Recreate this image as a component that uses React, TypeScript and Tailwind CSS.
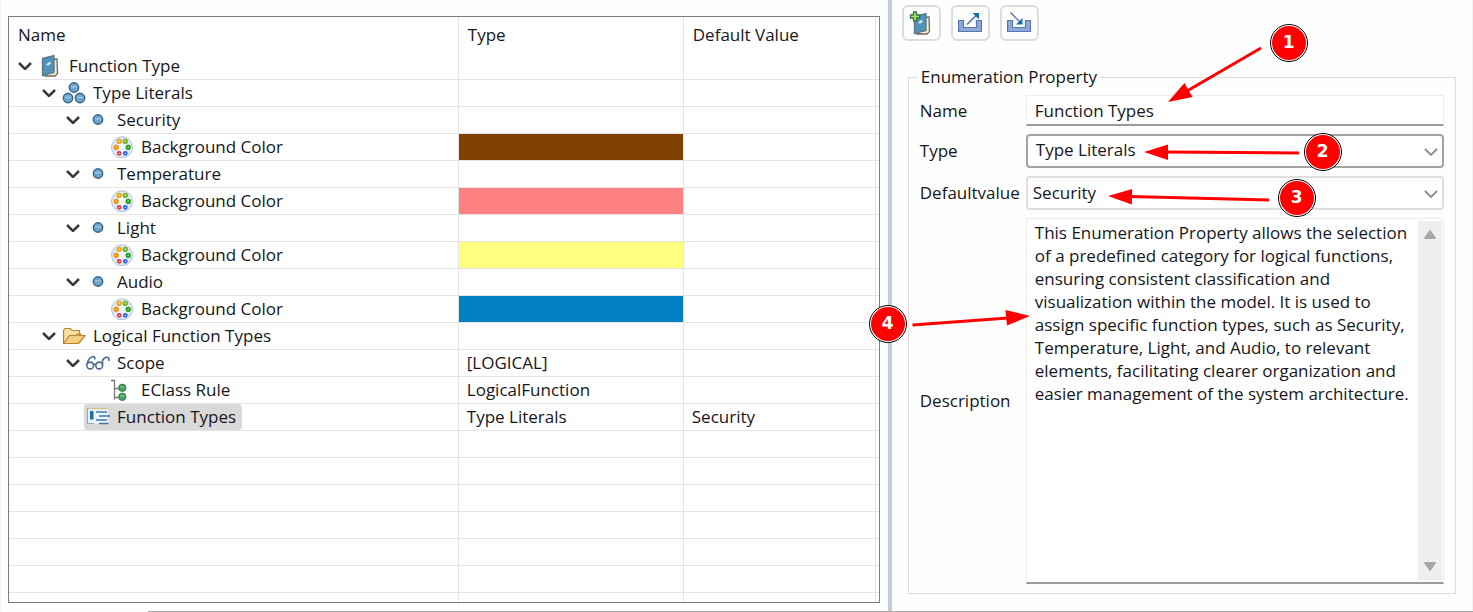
import type { ReactNode } from "react";

type IconName = "book" | "literals" | "literal" | "palette" | "folder" | "scope" | "rule" | "property";

interface Row {
  level: number;
  label: string;
  icon: IconName;
  leaf?: boolean;
  selected?: boolean;
  type?: string;
  value?: string;
  swatch?: string;
}

const rows: Row[] = [
  { level: 0, label: "Function Type", icon: "book" },
  { level: 1, label: "Type Literals", icon: "literals" },
  { level: 2, label: "Security", icon: "literal" },
  { level: 3, label: "Background Color", icon: "palette", leaf: true, swatch: "bg-[#804000]" },
  { level: 2, label: "Temperature", icon: "literal" },
  { level: 3, label: "Background Color", icon: "palette", leaf: true, swatch: "bg-[#ff8080]" },
  { level: 2, label: "Light", icon: "literal" },
  { level: 3, label: "Background Color", icon: "palette", leaf: true, swatch: "bg-[#ffff80]" },
  { level: 2, label: "Audio", icon: "literal" },
  { level: 3, label: "Background Color", icon: "palette", leaf: true, swatch: "bg-[#0080c0]" },
  { level: 1, label: "Logical Function Types", icon: "folder" },
  { level: 2, label: "Scope", icon: "scope", type: "[LOGICAL]" },
  { level: 3, label: "EClass Rule", icon: "rule", leaf: true, type: "LogicalFunction" },
  { level: 2, label: "Function Types", icon: "property", leaf: true, selected: true, type: "Type Literals", value: "Security" },
];

const indents = ["pl-[5px]", "pl-[29px]", "pl-[53px]", "pl-[77px]"];
const fillerRows = [0, 1, 2, 3, 4, 5, 6];

const description =
  "This Enumeration Property allows the selection of a predefined category for logical functions, ensuring consistent classification and visualization within the model. It is used to assign specific function types, such as Security, Temperature, Light, and Audio, to relevant elements, facilitating clearer organization and easier management of the system architecture.";

function Book() {
  return (
    <g>
      <path d="M8 6 L19 5 L19.500 19.500 L17 22 L7.500 22 Z" fill="#f3eed6" stroke="#6f6a5c" strokeWidth="1.3" />
      <path d="M4.500 4.500 L16 1.500 L16 18.500 L9.500 20 L8 21.500 L4.500 21.500 Z" fill="#4f94bb" stroke="#5f7480" strokeWidth="1.3" />
      <path d="M8.500 10.800 q2 -3 4.200 -2 q-1.600 3.200 -4.200 2 z" fill="#e8f4fb" stroke="#e8f4fb" strokeWidth="0.600" />
    </g>
  );
}

function Ball({ cx, cy, r }: { cx: number; cy: number; r: number }) {
  return (
    <g>
      <circle cx={cx} cy={cy} r={r} fill="#6da5cb" stroke="#36648d" strokeWidth="1.4" />
      <path d={`M${cx - r * 0.6} ${cy - 0.6} H${cx + r * 0.6}`} stroke="#a3cbe4" strokeWidth="1.3" />
    </g>
  );
}

function RowIcon({ name }: { name: IconName }) {
  const art: Record<IconName, ReactNode> = {
    book: <Book />,
    literals: (
      <g>
        <Ball cx={12} cy={6.5} r={4.7} />
        <Ball cx={6} cy={17} r={4.7} />
        <Ball cx={18} cy={17} r={4.7} />
      </g>
    ),
    literal: <Ball cx={12} cy={11.5} r={4.7} />,
    palette: (
      <g fill="#fff" strokeWidth="1.7">
        <path d="M5.5 20.5 A10.5 10.5 0 1 1 18.5 20.5 Q15.5 23 12.5 22.5 Q8 23.5 5.5 20.5 Z" fill="#dfe7f4" stroke="#b3c4de" strokeWidth="1" />
        <circle cx="12" cy="12.5" r="4.5" fill="#f1f5fa" />
        <circle cx="9.2" cy="6.3" r="1.8" fill="#ffe08a" stroke="#f0a500" />
        <circle cx="15.3" cy="6.3" r="1.8" fill="#d6ee7a" stroke="#6bb01c" />
        <circle cx="6.2" cy="12.3" r="1.8" fill="#ffc04a" stroke="#f58e00" />
        <circle cx="18.2" cy="12.3" r="1.8" fill="#8be05a" stroke="#1c9a1c" />
        <circle cx="9.2" cy="18.3" r="1.5" stroke="#e53946" />
        <circle cx="15.3" cy="18.3" r="1.5" stroke="#2763e6" />
      </g>
    ),
    folder: (
      <g stroke="#b9822f" strokeWidth="1.2" strokeLinejoin="round">
        <path d="M1.5 18.5 V6.5 L3 4.5 H8.5 L10 6.5 H17.5 V10 H19 L7 18.5 Z" fill="#f7dfa0" />
        <path d="M1.5 19.5 L7.5 11.5 H14 L15.5 10 L17 11.5 H23.3 L16.5 19.5 Z" fill="#f6ce80" />
      </g>
    ),
    scope: (
      <g fill="none" stroke="#4d6a91" strokeWidth="1.6">
        <circle cx="4.2" cy="14.5" r="3.4" />
        <circle cx="13.2" cy="14.5" r="3.4" />
        <path d="M7.6 14 Q8.7 12.5 9.8 14" />
        <path d="M1 13.5 Q2.2 6.5 7.2 5.5 Q9.2 5.5 8.7 8.5" />
        <path d="M16.5 14.5 V9.5 Q18.7 5.5 22.2 6.5 Q23.2 7.5 22.7 10" />
      </g>
    ),
    rule: (
      <g>
        <path d="M1 2.5 H4.5 V21.5 M4.5 10.5 H9 M4.5 19.5 H9" fill="none" stroke="#787878" strokeWidth="1.3" />
        <circle cx="12.3" cy="9.8" r="3.7" fill="#4a9f5e" stroke="#33804a" />
        <circle cx="12.3" cy="18.8" r="3.7" fill="#4a9f5e" stroke="#33804a" />
        <path d="M10 9 H14.5 M10 18 H14.5" stroke="#8fcb9b" strokeWidth="1" />
      </g>
    ),
    property: (
      <g>
        <path d="M2 4.2 H22 V18.5 H2 Z" fill="#f0f5fb" />
        <path d="M1.5 3.5 H22" stroke="#d3c68c" strokeWidth="1.4" />
        <path d="M1.5 3.5 V18.5 H8" fill="none" stroke="#8aa7cc" strokeWidth="1.2" />
        <path d="M4 6 H7.5 V14.5 H4 Z" fill="#1f6ea8" />
        <path d="M10 7 H21 M13 11 H24 M10 15 H21 M13 18.5 H22.5" stroke="#3779ad" strokeWidth="1.7" />
      </g>
    ),
  };
  return (
    <svg viewBox="0 0 24 24" className="size-6 shrink-0" aria-hidden="true">
      {art[name]}
    </svg>
  );
}

function Chevron({ className, width }: { className: string; width: number }) {
  return (
    <svg viewBox="0 0 14 8" className={className} fill="none" stroke="currentColor" strokeWidth={width} aria-hidden="true">
      <path d="M1 1 L7 7 L13 1" />
    </svg>
  );
}

function TreeTable() {
  const line = "border-r border-[#e4e4e4]";
  const cell = "h-[27px] border-r border-b border-[#e4e4e4] p-0";
  return (
    <div className="min-h-0 flex-1 overflow-hidden border border-[#7c7c7c] bg-white">
      <table className="w-full table-fixed border-separate border-spacing-0 text-left">
        <colgroup>
          <col />
          <col className="w-[225px]" />
          <col className="w-[192px]" />
          <col className="w-[3px]" />
        </colgroup>
        <thead>
          <tr>
            <th className={`${line} h-9 p-0 pl-[9px] font-normal`}>Name</th>
            <th className={`${line} h-9 p-0 pl-[9px] font-normal`}>Type</th>
            <th className={`${line} h-9 p-0 pl-[9px] font-normal`}>Default Value</th>
            <td className="p-0" />
          </tr>
        </thead>
        <tbody>
          {rows.map((row, i) => (
            <tr key={i}>
              <td className={cell}>
                <div className={`flex h-[26px] items-center ${indents[row.level]}`}>
                  <span className="flex w-[22px] shrink-0 justify-center">
                    {!row.leaf && (
                      <button type="button" aria-label={`Collapse ${row.label}`} className="p-0 text-[#3a3a3a]">
                        <Chevron className="h-2 w-3.5" width={2.5} />
                      </button>
                    )}
                  </span>
                  <span className={`flex h-full items-center gap-[7px] rounded-sm pr-1.5 pl-0.5 ${row.selected ? "bg-[#d9d9d9]" : ""}`}>
                    <RowIcon name={row.icon} />
                    <span className="whitespace-nowrap">{row.label}</span>
                  </span>
                </div>
              </td>
              <td className={`${cell} ${row.swatch ?? ""}`}>
                <div className="pl-2 leading-[26px]">{row.type}</div>
              </td>
              <td className={cell}>
                <div className="pl-2 leading-[26px]">{row.value}</div>
              </td>
              <td className="border-b border-[#e4e4e4] p-0" />
            </tr>
          ))}
          {fillerRows.map((n) => (
            <tr key={n}>
              <td className={cell} />
              <td className={cell} />
              <td className={cell} />
              <td className="border-b border-[#e4e4e4] p-0" />
            </tr>
          ))}
        </tbody>
      </table>
    </div>
  );
}

function ToolButton({ label, children }: { label: string; children: ReactNode }) {
  return (
    <button
      type="button"
      aria-label={label}
      className="flex h-9 w-[39px] items-center justify-center rounded-md border-2 border-[#dcdcdc] bg-[#fdfdfd]"
    >
      <svg viewBox="0 0 24 24" className="size-6" fill="none" aria-hidden="true">
        {children}
      </svg>
    </button>
  );
}

function Tray() {
  return <path d="M0.500 9.500 H5.500 V16.500 H18.500 V9.500 H23.500 V20.500 H0.500 Z" fill="#8fa9d6" stroke="#5578b5" strokeWidth="1.200" />;
}

function Toolbar() {
  return (
    <div className="flex gap-2.5 pt-[5px] pl-2.5">
      <ToolButton label="New property">
        <g transform="translate(1 1)">
          <Book />
        </g>
        <path d="M4.500 1 H7.500 V4 H10.500 V7 H7.500 V10 H4.500 V7 H1.500 V4 H4.500 Z" fill="#b4e06c" stroke="#2d7d3a" strokeWidth="1.300" />
      </ToolButton>
      <ToolButton label="Export">
        <Tray />
        <path d="M9 13.500 L19 3.500" stroke="#3e63a8" strokeWidth="1.200" />
        <path d="M14.500 2 H21 V8.500 Z" fill="#1a6bab" />
      </ToolButton>
      <ToolButton label="Import">
        <Tray />
        <path d="M3.500 1.500 L13.500 11.500" stroke="#3e63a8" strokeWidth="1.200" />
        <path d="M15.500 7 V13.500 H9 Z" fill="#1a6bab" />
      </ToolButton>
    </div>
  );
}

function Dropdown({ id, value, tone, inset }: { id: string; value: string; tone: string; inset: string }) {
  return (
    <div className="relative">
      <select
        id={id}
        defaultValue={value}
        className={`h-[34px] w-full appearance-none rounded-sm border-2 bg-white pr-8 outline-none ${tone} ${inset}`}
      >
        <option>{value}</option>
      </select>
      <Chevron className="pointer-events-none absolute top-3.5 right-1.5 h-2 w-3.5 text-[#8c8c8c]" width={1.8} />
    </div>
  );
}

function PropertyForm() {
  return (
    <fieldset className="mx-4 mt-6 mb-[17px] flex min-h-0 min-w-0 flex-1 flex-col border border-[#dcdcdc]">
      <legend className="ml-[9px] px-[3px] leading-6">Enumeration Property</legend>
      <div className="grid min-h-0 flex-1 grid-cols-[106px_minmax(0,1fr)] grid-rows-[31px_34px_34px_minmax(0,1fr)] items-center gap-y-2 pt-1.5 pr-[11px] pb-[9px] pl-[11px]">
        <label htmlFor="name">Name</label>
        <input
          id="name"
          defaultValue="Function Types"
          className="h-[31px] w-full border border-b-2 border-[#ececec] border-b-[#9a9a9a] bg-white px-2 outline-none"
        />
        <label htmlFor="type">Type</label>
        <Dropdown id="type" value="Type Literals" tone="border-[#a3a3a3] pb-0.5" inset="pl-2" />
        <label htmlFor="default">Defaultvalue</label>
        <Dropdown id="default" value="Security" tone="border-[#dedede]" inset="pl-[5px]" />
        <label htmlFor="description">Description</label>
        <div className="flex h-full min-h-0 border border-b-2 border-[#ececec] border-b-[#9a9a9a] bg-white">
          <textarea
            id="description"
            defaultValue={description}
            className="min-w-0 flex-1 resize-none overflow-hidden bg-white pt-0.5 pl-2 leading-[23px] outline-none"
          />
          <div className="my-0.5 mr-px flex w-6 flex-col items-center justify-between bg-[#efefef] py-2">
            <button type="button" aria-label="Scroll up" className="p-0">
              <svg viewBox="0 0 12 10" className="h-2.5 w-3 fill-[#a6a6a6]" aria-hidden="true">
                <path d="M6 0.5 L12 9 Q12 10 11 10 H1 Q0 10 0 9 Z" />
              </svg>
            </button>
            <button type="button" aria-label="Scroll down" className="p-0">
              <svg viewBox="0 0 12 10" className="h-2.5 w-3 fill-[#a6a6a6]" aria-hidden="true">
                <path d="M6 9.5 L12 1 Q12 0 11 0 H1 Q0 0 0 1 Z" />
              </svg>
            </button>
          </div>
        </div>
      </div>
    </fieldset>
  );
}

function Badge({ n, place }: { n: number; place: string }) {
  return (
    <span
      className={`absolute flex size-[38px] items-center justify-center rounded-full border border-black bg-white p-px ${place}`}
    >
      <span className="flex size-full items-center justify-center rounded-full bg-[#ff0000] font-['DejaVu_Sans',sans-serif] text-[17px] font-bold text-white">
        {n}
      </span>
    </span>
  );
}

function Callouts() {
  return (
    <div className="pointer-events-none absolute inset-0">
      <svg className="absolute inset-0 size-full overflow-visible" fill="#ff0000" stroke="#ff0000" aria-hidden="true">
        <g strokeWidth="3">
          <path d="M369 48 L295 91" />
          <path d="M407 153 L274 152" />
          <path d="M377 200 L238 196.5" />
          <path d="M20.5 325 L116 318" />
        </g>
        <g stroke="none">
          <path d="M276 102 L292.5 83 L300.5 97 Z" />
          <path d="M252 152 L276 144.5 V160 Z" />
          <path d="M216 196 L240.2 189 L239.8 204.5 Z" />
          <path d="M138 316 L113.5 310 L115 325.5 Z" />
        </g>
      </svg>
      <Badge n={1} place="top-6 left-[378px]" />
      <Badge n={2} place="top-[133px] left-[412px]" />
      <Badge n={3} place="top-[179px] left-[386px]" />
      <Badge n={4} place="top-[305px] -left-[23px]" />
    </div>
  );
}

export default function App() {
  return (
    <div className="flex h-screen min-h-[560px] flex-col bg-[#fefefe] font-['Open_Sans','Noto_Sans',sans-serif] text-[17px] text-[#16161d]">
      <main className="grid min-h-0 flex-1 grid-cols-[888fr_4px_581fr] border-x border-x-[#f2f2f2]">
        <section aria-label="Properties" className="flex min-h-0 min-w-0 flex-col pt-4 pr-2 pb-2 pl-[7px]">
          <TreeTable />
        </section>
        <div className="bg-[#c0cddb]" />
        <section aria-label="Details" className="relative flex min-h-0 min-w-0 flex-col">
          <Toolbar />
          <PropertyForm />
          <Callouts />
        </section>
      </main>
      <div className="ml-[148px] h-px bg-[#a8a8a8]" />
    </div>
  );
}
